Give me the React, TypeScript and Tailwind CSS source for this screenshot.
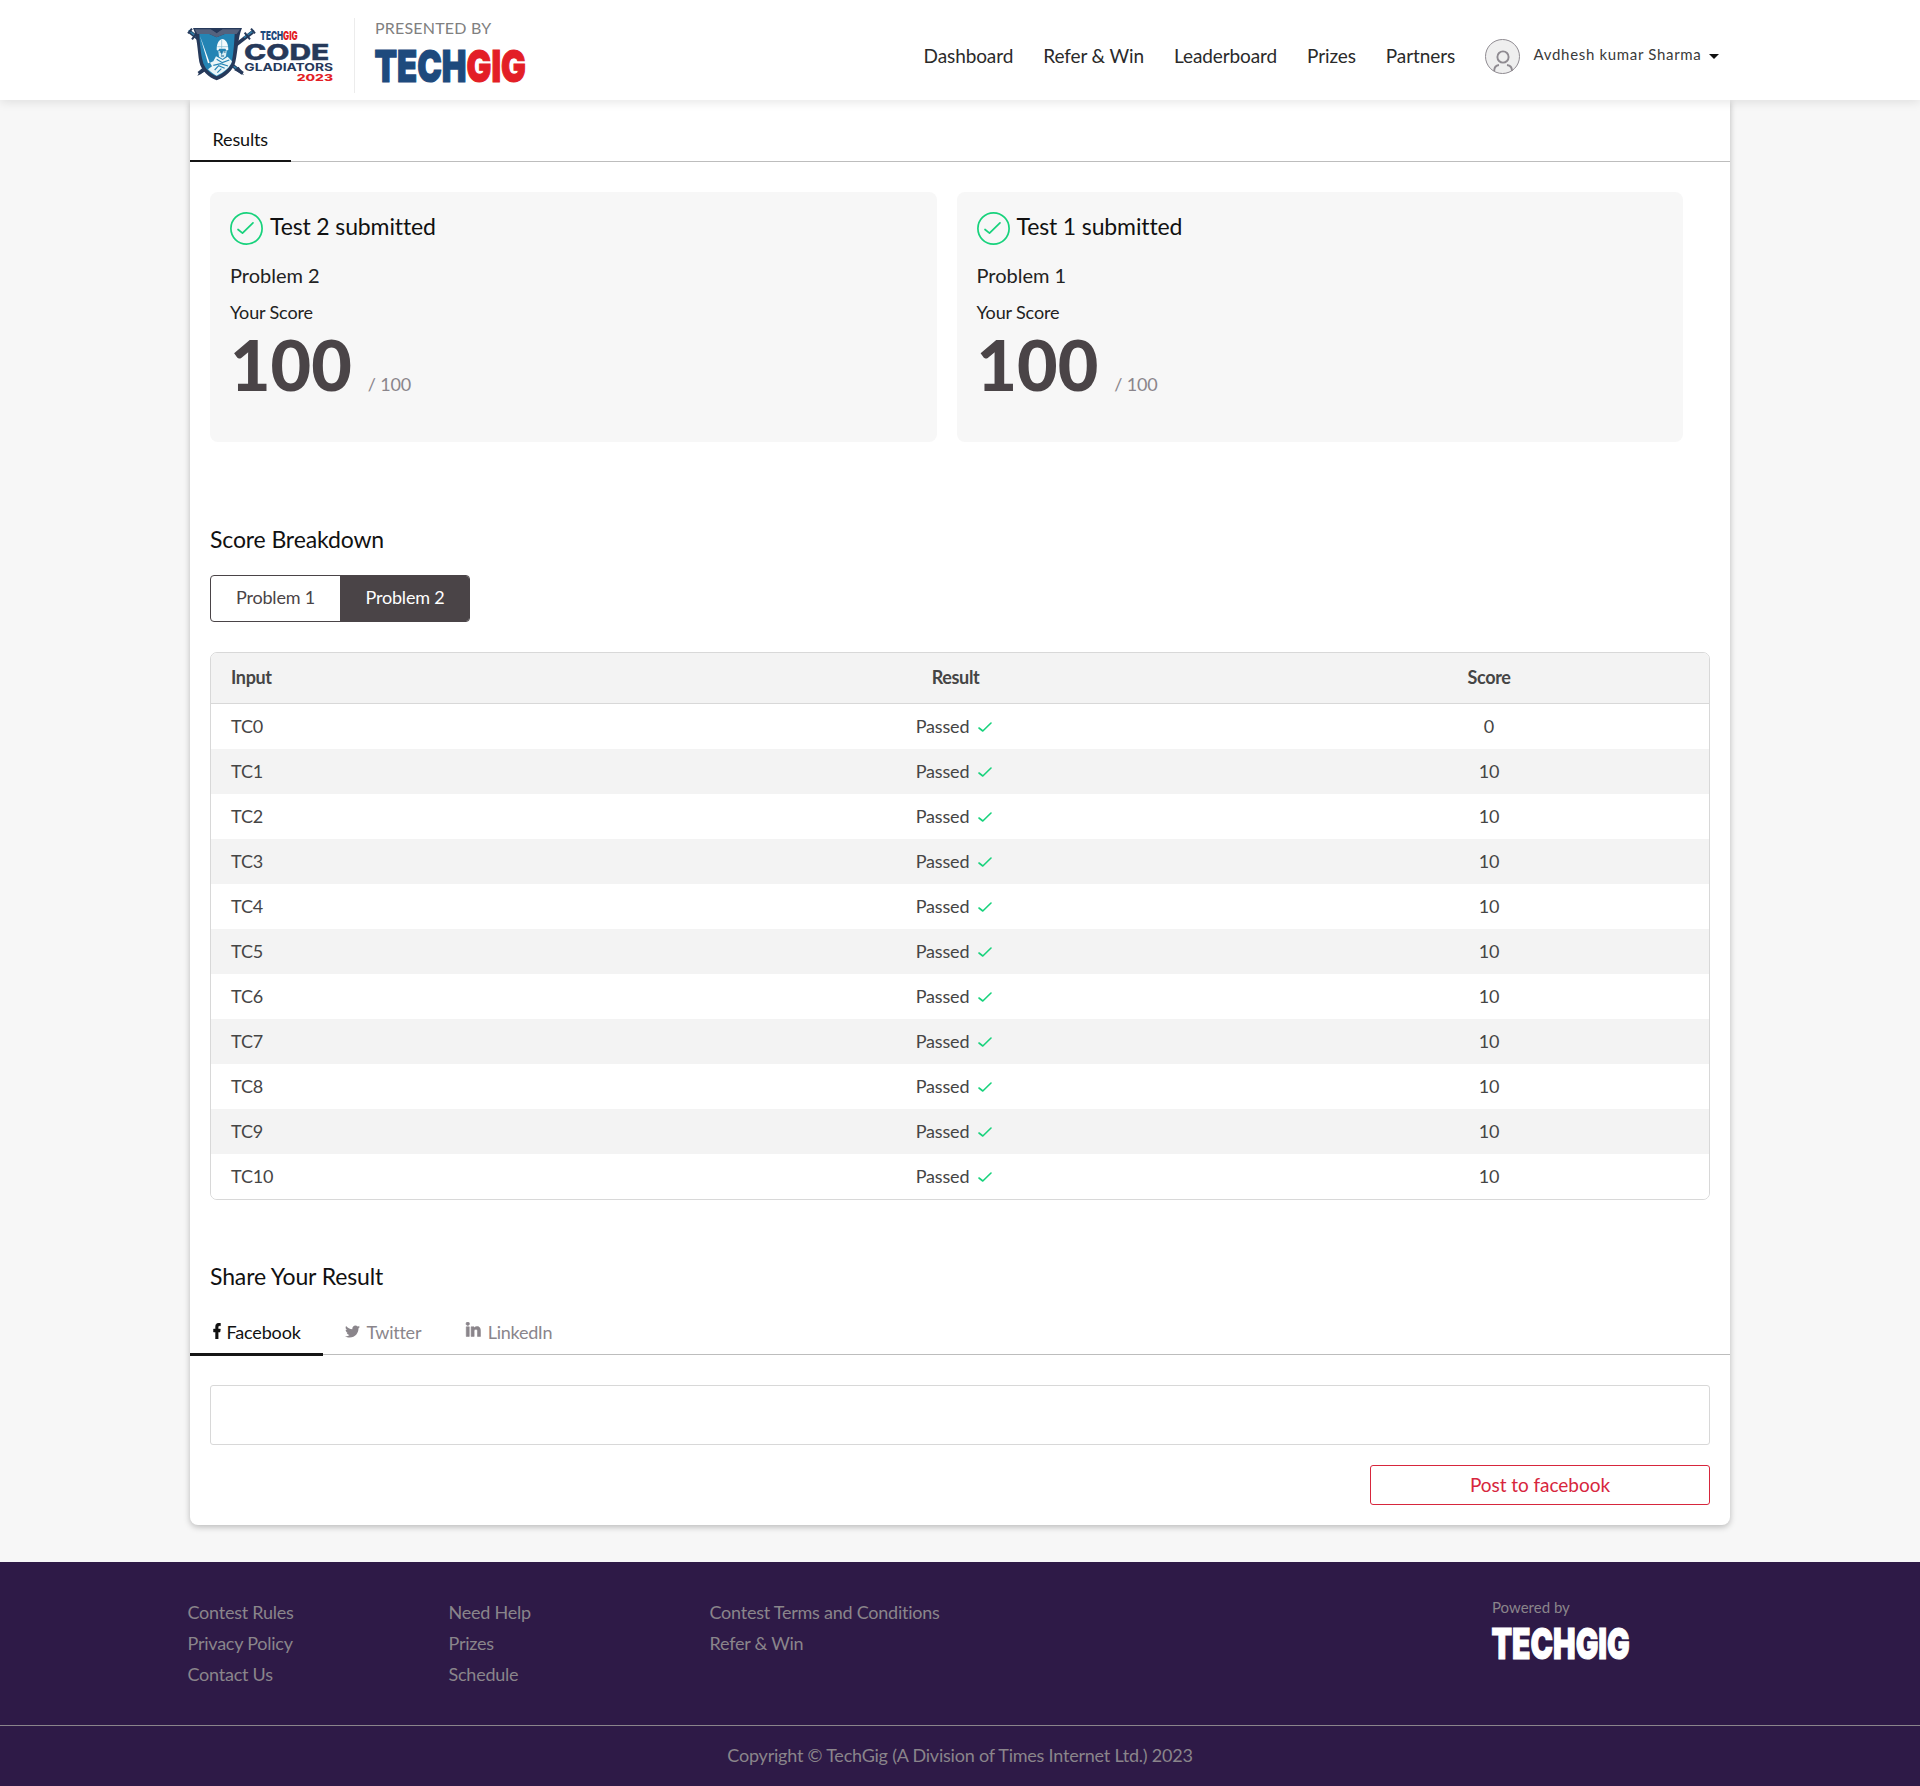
import React from "react";
import { FaFacebookF, FaLinkedinIn, FaTwitter } from "react-icons/fa";

const navItems = ["Dashboard", "Refer & Win", "Leaderboard", "Prizes", "Partners"];

const tests = [
  { title: "Test 2 submitted", problem: "Problem 2", score: 100 },
  { title: "Test 1 submitted", problem: "Problem 1", score: 100 },
];

const rows = Array.from({ length: 11 }, (_, i) => ({ name: `TC${i}`, score: i === 0 ? 0 : 10 }));

const footerColumns = [
  ["Contest Rules", "Privacy Policy", "Contact Us"],
  ["Need Help", "Prizes", "Schedule"],
  ["Contest Terms and Conditions", "Refer & Win"],
];

function GladiatorsLogo() {
  return (
    <svg className="block h-[70px] w-[154px]" viewBox="0 0 462 210">
      {/* crossed swords */}
      <g stroke="#26395a" strokeWidth="11" fill="none">
        <path d="M18 36 L176 160" />
        <path d="M206 36 L44 160" />
      </g>
      <g stroke="#2d7ba6" strokeWidth="5" fill="none">
        <path d="M14 31 L40 53" />
        <path d="M210 31 L180 53" />
        <path d="M50 155 L70 140" />
        <path d="M168 153 L145 136" />
      </g>
      <g stroke="#26395a" strokeWidth="6" fill="none">
        <path d="M12 40 L24 26" />
        <path d="M201 26 L213 40" />
        <path d="M24 58 L38 40" />
        <path d="M182 38 L198 58" />
      </g>
      <path d="M40 168 L52 146 L66 152 Z" fill="#26395a" />
      <path d="M180 166 L150 150 L164 140 Z" fill="#26395a" />
      {/* shield */}
      <path d="M27 24 H174 C162 50 162 90 154 126 C148 152 122 172 98 181 C74 172 52 152 46 126 C40 90 40 50 27 24 Z" fill="#26395a" />
      <path d="M46 42 L76 42 L98 52 L122 42 L152 42 C150 80 148 102 144 122 C139 144 118 160 98 169 C78 160 60 144 56 122 C50 100 48 76 46 42 Z" fill="#2484b4" />
      <path d="M32 28 H80 L98 38 L116 28 H168 L158 42 H122 L98 52 L76 42 H40 Z" fill="#54627e" />
      <path d="M80 25 H116 L98 40 Z" fill="#26395a" />
      {/* gladiator */}
      <path d="M48 48 L72 130 L77 128 Z" fill="#ffffff" />
      <path d="M98 89 C98 66 108 58 115 57 C124 58 133 68 133 89 L128 92 L124 86 H106 L102 92 Z" fill="#f3fafc" />
      <path d="M113 59 V86 M100 80 H132" stroke="#7bb6cf" strokeWidth="2" />
      <path d="M103 92 L109 94 L113 106 L118 94 L128 92 L126 109 L116 117 L105 110 Z" fill="#d8edf4" />
      <path d="M107 96 H113 M119 96 H125 M111 108 H120" stroke="#1b5f88" strokeWidth="3" />
      <path d="M96 109 L116 120 L131 110 L144 124 C139 142 119 158 98 167 C90 163 80 156 72 148 L84 139 L78 128 L88 124 Z" fill="#e9f5f8" />
      <path d="M98 118 L115 128 L136 120 M88 136 L110 131 L132 138 M92 150 L104 137 L122 145 M100 158 L112 146" stroke="#2484b4" strokeWidth="3.5" fill="none" />
      {/* wordmark */}
      <g fontFamily="Inter, sans-serif" fontWeight="800">
        <text x="229" y="60" fontWeight="900" fontSize="36" textLength="112" lengthAdjust="spacingAndGlyphs" fill="#1e4a7d">
          TECH<tspan fill="#e31e26">GIG</tspan>
        </text>
        <text x="180" y="120" fontSize="65" textLength="256" lengthAdjust="spacingAndGlyphs" fill="#26395a" stroke="#26395a" strokeWidth="1">CODE</text>
        <text x="181" y="152" fontSize="31" fontWeight="700" textLength="266" lengthAdjust="spacingAndGlyphs" fill="#26395a">GLADIATORS</text>
        <text x="338" y="182" fontSize="28" textLength="109" lengthAdjust="spacingAndGlyphs" fill="#e31e26">2023</text>
      </g>
    </svg>
  );
}

function TechGigLogo({ className, light = false }: { className: string; light?: boolean }) {
  const blue = light ? "#ffffff" : "#1e4a7d";
  const red = light ? "#ffffff" : "#e31e26";
  return (
    <svg className={className} viewBox="0 0 150 34" preserveAspectRatio="none" overflow="visible">
      <text
        x="-0.6"
        y="33.4"
        fontFamily="Inter, sans-serif"
        fontWeight="900"
        fontSize="44.5"
        strokeWidth="1.2"
        textLength="151.5"
        lengthAdjust="spacingAndGlyphs"
        fill={blue}
        stroke={blue}
      >
        TECH<tspan fill={red} stroke={red}>GIG</tspan>
      </text>
    </svg>
  );
}

function Header() {
  return (
    <header className="relative z-10 h-[100px] bg-white shadow-[0_2px_10px_rgba(0,0,0,0.1)]">
      <div className="mx-auto flex h-full w-[1552px]">
        <div className="pt-5">
          <GladiatorsLogo />
        </div>
        <div className="mt-[18px] ml-4 h-[75px] w-px bg-[#ececec]" />
        <div className="ml-5 pt-[18px]">
          <p className="text-[16px] leading-5 tracking-[0.2px] text-[#808080]">PRESENTED BY</p>
          <TechGigLogo className="mt-[11px] block h-[34px] w-[150px]" />
        </div>
        <nav className="mt-11 ml-auto flex h-6 gap-[30px] text-[19px] leading-6 tracking-[-0.1px] text-[#2a2a2a]">
          {navItems.map((item) => (
            <a key={item}>{item}</a>
          ))}
        </nav>
        <div className="mr-[17px] ml-[30px] flex pt-[39px]">
          <svg className="size-[35px]" viewBox="0 0 35 35" fill="none" stroke="#8f8b91">
            <circle cx="17.5" cy="17.5" r="17" fill="#efefef" strokeWidth="1" />
            <circle cx="18" cy="18" r="5.6" strokeWidth="1.9" />
            <path d="M9.2 32 C9.2 28.5 11 26.3 14 26 M22 26 C25 26.3 27 28.5 27 32" strokeWidth="1.9" />
          </svg>
          <span className="ml-[13.5px] pt-[5px] text-[15px] leading-5 tracking-[0.68px] text-[#3a3a3a]">Avdhesh kumar Sharma</span>
          <svg className="mt-[15px] ml-[7.5px] h-[5px] w-[10px]" viewBox="0 0 10 5">
            <path d="M0 0 H10 L5 5 Z" fill="#111" />
          </svg>
        </div>
      </div>
    </header>
  );
}

function TestCard({ title, problem, score }: { title: string; problem: string; score: number }) {
  return (
    <section className="h-[250px] w-[726.5px] rounded-lg bg-[#f7f7f7] p-5">
      <div className="flex gap-[7px]">
        <svg className="size-[33px]" viewBox="0 0 33 33" fill="none" stroke="#17d27c" strokeWidth="1.7">
          <circle cx="16.5" cy="16.5" r="15.6" />
          <path d="M8 17.5 L12.5 21.2 L23 10.8" strokeLinecap="round" strokeLinejoin="round" />
        </svg>
        <h2 className="text-[23px] leading-7 tracking-[-0.13px] text-[#111] [font-variant-ligatures:none]">{title}</h2>
      </div>
      <p className="mt-[18px] text-[20px] leading-6 text-[#222]">{problem}</p>
      <p className="mt-[13px] text-[18px] leading-6 tracking-[-0.15px] text-[#222]">Your Score</p>
      <p className="mt-[5px] flex items-baseline text-[#4a4447]">
        <span className="text-[70px] leading-[70px] font-black">{score}</span>
        <span className="ml-4 text-[18px] tracking-[-0.15px] text-[#8a858b]">/ 100</span>
      </p>
    </section>
  );
}

function ResultTable() {
  return (
    <div className="mx-5 mt-[30px] overflow-hidden rounded-[7px] border border-[#d8d8d8] text-[18px] text-[#454545]">
      <div className="grid h-[51px] grid-cols-[432px_626px_440px] items-center border-b border-[#d8d8d8] bg-[#f3f3f3] pb-0.5 text-center leading-6 font-bold tracking-[-0.35px]">
        <span className="pl-5 text-left">Input</span>
        <span className="pr-px">Result</span>
        <span>Score</span>
      </div>
      {rows.map((row) => (
        <div key={row.name} className="grid h-[45px] grid-cols-[432px_626px_440px] text-center leading-[45px] tracking-[-0.15px] even:bg-white odd:bg-[#f3f3f3]">
          <span className="pl-5 text-left">{row.name}</span>
          <span className="flex items-center justify-center gap-[9px] pr-1">
            <span>Passed</span>
            <svg className="h-[10px] w-[14px]" viewBox="0 0 14 10" fill="none" stroke="#17d27c" strokeWidth="1.6">
              <path d="M1 6 L4.8 9 L13 1" strokeLinecap="round" strokeLinejoin="round" />
            </svg>
          </span>
          <span>{row.score}</span>
        </div>
      ))}
    </div>
  );
}

function Share() {
  return (
    <>
      <h2 className="mt-[62px] px-5 text-[23px] leading-7 tracking-[-0.13px] text-[#111]">Share Your Result</h2>
      <div className="flex h-[65px] border-b border-[#bdbdbd] text-[18px] leading-6 tracking-[-0.15px] text-[#8a858b]">
        <a className="flex h-[66px] w-[133px] shrink-0 border-b-[3px] border-[#151515] pt-[30px] pl-[23px] text-[#111]">
          <FaFacebookF className="mt-[2.5px] h-4 w-[8px] stroke-current" strokeWidth={20} preserveAspectRatio="none" />
          <span className="ml-[5.5px]">Facebook</span>
        </a>
        <a className="flex pt-[30px] pl-[22px]">
          <FaTwitter className="mt-1 size-[15px]" />
          <span className="ml-[6.5px] tracking-[-0.25px]">Twitter</span>
        </a>
        <a className="flex pt-[30px] pl-[44px]">
          <FaLinkedinIn className="mt-[2px] size-[16.5px] stroke-current" strokeWidth={18} />
          <span className="ml-[6px] tracking-[-0.25px]">LinkedIn</span>
        </a>
      </div>
      <textarea className="mx-5 mt-[30px] block h-[60px] w-[1500px] resize-none rounded-[3px] border border-[#d8d8d8] bg-white" />
      <button className="mt-5 mr-5 ml-auto block h-10 w-[340px] rounded-[3px] border border-[#d7263d] text-[19px] leading-[36px] tracking-[-0.05px] text-[#d7263d]">
        Post to facebook
      </button>
    </>
  );
}

function Footer() {
  return (
    <footer className="mt-[37px] h-[224px] bg-[#2e1a47] text-[18px] text-[#8a858b]">
      <div className="mx-auto flex h-[163px] w-[1545px] pt-[35px]">
        {footerColumns.map((column) => (
          <ul key={column[0]} className="w-[261px] leading-[31px] whitespace-nowrap tracking-[-0.24px]">
            {column.map((link) => (
              <li key={link}>{link}</li>
            ))}
          </ul>
        ))}
        <div className="mr-[103.5px] ml-auto">
          <p className="text-[15px] leading-5">Powered by</p>
          <TechGigLogo light className="mt-[10px] block h-[33px] w-[137px]" />
        </div>
      </div>
      <p className="h-[61px] border-t border-[#8a858b] pt-[17px] text-center leading-6 tracking-[-0.22px]">
        Copyright © TechGig (A Division of Times Internet Ltd.) 2023
      </p>
    </footer>
  );
}

export default function App() {
  return (
    <div className="min-h-[1786px] bg-[#f7f7f7] font-['Lato',sans-serif]">
      <Header />
      <main className="mx-auto h-[1425px] w-[1540px] rounded-b-lg bg-white shadow-[0_2px_6px_rgba(0,0,0,0.25)]">
        <div className="flex h-[62px] border-b border-[#bdbdbd]">
          <a className="h-[62px] w-[100.5px] border-b-2 border-[#151515] pt-[27px] pl-[22.5px] text-[18px] leading-6 tracking-[-0.15px] text-[#111]">
            Results
          </a>
        </div>
        <div className="mt-[30px] flex gap-5 px-5">
          {tests.map((test) => (
            <TestCard key={test.title} {...test} />
          ))}
        </div>
        <h2 className="mt-[83px] px-5 text-[23px] leading-7 tracking-[-0.13px] text-[#111]">Score Breakdown</h2>
        <div className="mx-5 mt-[22px] flex h-[47px] w-[260px] overflow-hidden rounded-[4px] border border-[#4a4447] text-[18px] text-[#4a4447]">
          <button className="w-[129px] pb-[3px] tracking-[-0.2px]">Problem 1</button>
          <button className="flex-1 bg-[#4a4447] pb-[3px] pl-px tracking-[-0.2px] text-white">Problem 2</button>
        </div>
        <ResultTable />
        <Share />
      </main>
      <Footer />
    </div>
  );
}
